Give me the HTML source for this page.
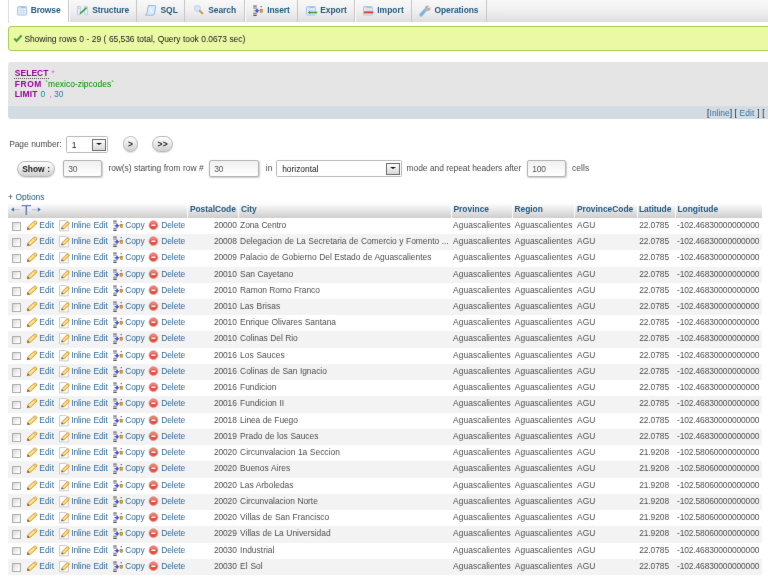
<!DOCTYPE html>
<html><head><meta charset="utf-8"><title>phpMyAdmin</title>
<style>
html,body{margin:0;padding:0;background:#fff;}
body{width:768px;height:577px;overflow:hidden;position:relative;filter:url(#soft);font-family:"Liberation Sans",sans-serif;font-size:8.44px;color:#444;}
a{color:#316997;text-decoration:none;}
#topbar{position:absolute;left:0;top:0;width:768px;height:21.6px;}
#topbar .bg{position:absolute;left:8px;top:0;width:760px;height:21.6px;background:linear-gradient(#f8f8f8,#f1f1f1 45%,#dedede);}
#topbar .act{position:absolute;left:8px;top:0;width:60px;height:23px;background:#fff;border-left:1px solid #dcdcdc;box-sizing:border-box;}
#topbar u{position:absolute;top:0;width:1.5px;height:21.6px;background:linear-gradient(90deg,#c6c6c6 55%,#fcfcfc 55%);}
#topbar>span{position:absolute;top:0;line-height:21.6px;font-weight:bold;color:#235a81;white-space:nowrap;}
#topbar svg{position:absolute;overflow:visible;}
#succ{position:absolute;left:8px;top:25.8px;width:770px;height:25px;background:#ebf8a4;border:1px solid #a2d246;border-radius:3px;box-sizing:border-box;}
#succ>span{position:absolute;left:15.4px;top:0;line-height:25.4px;color:#1a1a1a;white-space:nowrap;}
#sql{position:absolute;left:8px;top:61.8px;width:770px;height:44px;background:#e5e5e5;border-radius:3px 3px 0 0;}
#sql div{position:absolute;white-space:nowrap;line-height:10.5px;}
#sql b{color:#909;}
#tools{position:absolute;left:8px;top:105.8px;width:770px;height:12.9px;background:#d3dce3;border-radius:0 0 3px 3px;}
#tools>span{position:absolute;top:0;line-height:14px;white-space:nowrap;color:#222;}
#tools a{color:#3d73a0;}
.lbl{position:absolute;white-space:nowrap;line-height:12px;color:#4a4a4a;}
.inp{position:absolute;box-sizing:border-box;border:1px solid #b2b2b2;border-radius:2px;background:linear-gradient(#f0f0f0,#fff);box-shadow:0.5px 1px 1.5px #ccc;line-height:16.8px;padding-left:4px;color:#555;height:16.4px;}
.btn{position:absolute;box-sizing:border-box;border:1px solid #b8b8b8;border-radius:9px;background:linear-gradient(#fff,#d0d0d0);font-weight:bold;color:#222;text-align:center;box-shadow:0 1px 1px #ddd;}
.sel{position:absolute;box-sizing:border-box;border:1px solid #b8b8b8;border-radius:1.5px;background:#fff;color:#1a1a1a;height:16.4px;line-height:16.4px;padding-left:5px;}
.sel i{position:absolute;right:1.6px;top:1.8px;width:13.8px;height:11.5px;box-sizing:border-box;border:1px solid #6a6a6a;border-radius:0.5px;background:linear-gradient(#fcfcfc,#d8d8d8);}
.sel i:after{content:"";position:absolute;left:2.7px;top:3.3px;border:3.2px solid transparent;border-top:2.9px solid #111;border-bottom:0;}
#thead{position:absolute;left:8px;top:201.3px;width:753.5px;height:16.5px;background:linear-gradient(#fff,#fdfdfd 15%,#cdcdcd);}
#thead>span{position:absolute;top:0;line-height:17.2px;font-weight:bold;color:#235a81;white-space:nowrap;}
#thead u{position:absolute;top:0;width:1.3px;height:16.5px;background:#fff;opacity:.85;}
.row{position:absolute;left:8px;width:753.5px;}
.row.even{background:#f3f3f3;}
.row.odd{background:#fff;}
.row>span,.row>a{position:absolute;top:0;line-height:15px;white-space:nowrap;}
.row>span{color:#4e4e4e;}
.row>span.r{text-align:right;}
.row .cb{position:absolute;left:4.3px;top:4.2px;width:8.6px;height:8.6px;box-sizing:border-box;border:1px solid #acacac;border-radius:0.6px;background:linear-gradient(135deg,#d6d6d6,#fbfbfb 75%);}
.row .ic{position:absolute;top:2px;width:12px;height:12px;overflow:visible;}
</style></head><body>
<svg width="0" height="0" style="position:absolute">
 <defs>
  <filter id="soft" x="0" y="0" width="100%" height="100%" color-interpolation-filters="sRGB"><feConvolveMatrix order="3" kernelMatrix="0.0028 0.0471 0.0028 0.0471 0.8008 0.0471 0.0028 0.0471 0.0028" divisor="1" edgeMode="duplicate" preserveAlpha="false"/></filter>
  <symbol id="i-edit" viewBox="0 0 12 12" overflow="visible">
   <path d="M1.3 9.7 L1.84 6.87 L7.95 1.40 Q9.2 0.4 10.3 1.6 Q11.2 2.9 10.3 4.0 L4.18 9.47 Z" fill="#f8d662" stroke="#d39236" stroke-width="0.8" stroke-linejoin="round"/>
   <path d="M1.15 9.85 L1.75 7.3 L3.9 9.3 Z" fill="#7d5a3a"/>
   <path d="M3.2 7.9 L8.9 2.7" stroke="#fdeeb0" stroke-width="1.1"/>
   <path d="M7.5 2.0 L9.8 4.5" stroke="#e0a040" stroke-width="0.7"/>
  </symbol>
  <symbol id="i-inl" viewBox="0 0 12 12" overflow="visible">
   <path d="M0.5 0.5 h6.4 l2.4 2.4 v8 h-8.8z" fill="#fcfcfc" stroke="#c6c6c6" stroke-width="0.9"/>
   <path d="M2.5 9.0 L3.1 6.7 L8.0 2.0 Q9.0 1.3 9.9 2.2 Q10.6 3.2 9.8 4.1 L5.0 8.8 Z" fill="#f8d25c" stroke="#cf8a30" stroke-width="0.8" stroke-linejoin="round"/>
   <path d="M2.35 9.2 L2.95 7.2 L4.6 8.8 Z" fill="#7d5a3a"/>
   <path d="M4.2 7.4 L8.8 3.2" stroke="#fdeeb0" stroke-width="0.9"/>
  </symbol>
  <symbol id="i-copy" viewBox="0 0 12 12" overflow="visible">
   <path d="M2 0.4 v1.4 M2 2.6 v1 M2 7.7 v1 M2 9.5 v1.5" stroke="#555" stroke-width="3.4"/>
   <path d="M2 1.8v0.8M2 8.7v0.8" stroke="#d0d0d0" stroke-width="3.4"/>
   <path d="M0.5 5.7 L2.9 4.9 L4.2 3.2 L5.2 4.9 L6.8 5.7 L5.2 6.5 L4.2 8.2 L2.9 6.5 Z" fill="#4b4fe0"/>
   <rect x="7.1" y="4.2" width="2.3" height="3" fill="#f0a818" stroke="#8a6416" stroke-width="0.5"/>
   <rect x="7.6" y="1" width="1.3" height="1.2" fill="#5a5ee8"/>
  </symbol>
  <symbol id="i-del" viewBox="0 0 12 12" overflow="visible">
   <circle cx="5.4" cy="5.2" r="4.35" fill="#e24e44" stroke="#f0958b" stroke-width="0.9"/>
   <path d="M1.5 4.2 A4 4 0 0 1 9.3 4.2 Q5.4 2.6 1.5 4.2Z" fill="#f0877d" opacity="0.85"/>
   <rect x="3.3" y="4.55" width="4.2" height="1.4" rx="0.3" fill="#fff"/>
  </symbol>
  <symbol id="i-tbl" viewBox="0 0 11 11" overflow="visible">
   <rect x="0.5" y="0.5" width="9.2" height="8.6" rx="0.8" fill="#eaf2fc" stroke="#a9c6ea"/><rect x="1" y="1" width="8.2" height="1.6" fill="#cfe0f5"/><rect x="3.9" y="1.1" width="4.8" height="0.9" fill="#9ccc6a"/><path d="M1 4.6h8.2M1 6.8h8.2M3.7 2.6v6M6.5 2.6v6" stroke="#c2d6f0" stroke-width="0.7"/>
  </symbol>
 </defs>
</svg>
<div id="topbar">
 <div class="bg"></div><div class="act"></div>
 <u style="left:68px"></u><u style="left:135.75px"></u><u style="left:183.75px"></u><u style="left:244px"></u><u style="left:296.5px"></u><u style="left:354px"></u><u style="left:410.75px"></u><u style="left:485.8px"></u>
 <svg style="left:16.8px;top:5.6px" width="11" height="11"><use href="#i-tbl"/></svg>
 <span style="left:30.7px"><span style="letter-spacing:-0.106px">Browse</span></span>
 <svg style="left:77px;top:5.8px" width="11" height="9" viewBox="0 0 11 9"><rect x="0.4" y="0.4" width="3.2" height="8.4" rx="0.6" fill="#e4eefb" stroke="#a9c6ea" stroke-width="0.8"/><rect x="7.4" y="0.4" width="3.2" height="8.4" rx="0.6" fill="#e4eefb" stroke="#a9c6ea" stroke-width="0.8"/><path d="M0.8 2.2h2.4M7.8 2.2h2.4" stroke="#b6d4a0" stroke-width="0.8"/><path d="M3.4 7.2 L5 5.8 L9 2.2" stroke="#46a23a" stroke-width="1.7" stroke-linecap="round" fill="none"/></svg>
 <span style="left:92.25px"><span style="letter-spacing:-0.058px">Structure</span></span>
 <svg style="left:145px;top:5.1px" width="11.5" height="11" viewBox="0 0 11.5 11"><path d="M3 0.6 h7.2 q0.8 0 0.6 1 l-1.6 7.6 q-0.2 1 -1.2 1 h-7.2 q-0.8 0 0 -1.2 l1 -0.3 l1.4 -7.1 q0.2 -1 1 -1z" fill="#d9e8fa" stroke="#8db4e2" stroke-width="0.9"/><path d="M4.2 3 L7.8 7.8" stroke="#eef5fd" stroke-width="1.6"/></svg>
 <span style="left:160.4px"><span style="letter-spacing:0.058px">SQL</span></span>
 <svg style="left:193.6px;top:5px" width="11" height="11" viewBox="0 0 11 11"><circle cx="3.4" cy="3.4" r="3" fill="#d6e8fa" stroke="#b4cdea" stroke-width="0.9"/><path d="M5.9 6 L8.4 8.4" stroke="#c69645" stroke-width="2" stroke-linecap="round"/></svg>
 <span style="left:208.25px"><span style="letter-spacing:-0.041px">Search</span></span>
 <svg style="left:252.9px;top:5.4px;width:12px;height:12px"><use href="#i-copy"/></svg>
 <span style="left:267.15px"><span style="letter-spacing:-0.045px">Insert</span></span>
 <svg style="left:305.8px;top:5.6px" width="12" height="10" viewBox="0 0 12 10"><rect x="0.5" y="0.5" width="8.8" height="8.6" rx="0.8" fill="#eaf2fc" stroke="#a9c6ea"/><rect x="1" y="1" width="7.8" height="1.6" fill="#cfe0f5"/><rect x="3.4" y="1.1" width="5" height="0.9" fill="#9ccc6a"/><path d="M1.2 4.3h7.4M3.8 2.6v6M6.4 2.6v6" stroke="#c2d6f0" stroke-width="0.7"/><path d="M3 6.5h8.2" stroke="#3aa32e" stroke-width="1.6"/><path d="M4.2 4.8 L1.6 6.5 L4.2 8.2z" fill="#3aa32e"/></svg>
 <span style="left:320.2px"><span style="letter-spacing:-0.020px">Export</span></span>
 <svg style="left:363px;top:5.6px" width="12" height="10" viewBox="0 0 12 10"><rect x="0.5" y="0.5" width="8.8" height="8.6" rx="0.8" fill="#eaf2fc" stroke="#a9c6ea"/><rect x="1" y="1" width="7.8" height="1.6" fill="#cfe0f5"/><rect x="3.4" y="1.1" width="5" height="0.9" fill="#9ccc6a"/><path d="M1.2 4.3h7.4M3.8 2.6v3M6.4 2.6v3" stroke="#c2d6f0" stroke-width="0.7"/><path d="M1 6.4h8.4" stroke="#ea3a30" stroke-width="2.1"/><path d="M8.8 5 L10.6 6.4 L8.8 7.8z" fill="#ea3a30"/></svg>
 <span style="left:377.2px"><span style="letter-spacing:0.059px">Import</span></span>
 <svg style="left:419.4px;top:4.6px" width="12" height="12" viewBox="0 0 12 12"><path d="M2 9.9 L6.4 5" stroke="#7db0e8" stroke-width="3.3" stroke-linecap="round"/><path d="M5.9 5.6 L7.8 3.6" stroke="#b2b6ba" stroke-width="2.6"/><circle cx="8.7" cy="3.3" r="2.8" fill="#b2b6ba"/><path d="M8.9 3.2 L12 2 L10.2 -0.4 Z" fill="#f3f3f3"/></svg>
 <span style="left:434.45px"><span style="letter-spacing:-0.042px">Operations</span></span>
</div>
<div id="succ"><svg style="position:absolute;left:3.5px;top:7.7px;overflow:visible" width="10" height="9" viewBox="0 0 10 9"><path d="M1.3 4.5 L3.6 7 L8.6 1.4" stroke="#4aa03e" stroke-width="2.1" fill="none"/></svg><span><span style="letter-spacing:-0.034px;word-spacing:0.251px">Showing rows 0 - 29 ( 65,536 total, Query took 0.0673 sec)</span></span></div>
<div id="sql">
 <div style="left:6.8px;top:6.6px"><b><span style="letter-spacing:0.076px">SELECT</span></b></div>
 <div style="left:6px;top:16.4px;width:35px;height:0;border-top:1px dotted #555"></div>
 <div style="left:43.6px;top:6.6px;color:#d868d8">*</div>
 <div style="left:6.8px;top:17.1px"><b><span style="letter-spacing:0.6px">FROM</span></b></div>
 <div style="left:37.3px;top:17.1px;color:#080"><span style="letter-spacing:0.019px">`mexico-zipcodes`</span></div>
 <div style="left:6.8px;top:27.6px"><b><span style="letter-spacing:0.137px">LIMIT</span></b></div>
 <div style="left:32.6px;top:27.6px;color:#1a86a4"><span style="letter-spacing:-0.151px">0</span></div>
 <div style="left:41.4px;top:27.6px;color:#d868d8">,</div>
 <div style="left:46.1px;top:27.6px;color:#1a86a4"><span style="letter-spacing:-0.151px">30</span></div>
</div>
<div id="tools"><span style="left:699px"><span style="letter-spacing:0.251px">[</span><a><span style="letter-spacing:-0.010px">Inline</span></a><span style="letter-spacing:0.251px">]</span></span><span style="left:726.6px"><span style="letter-spacing:0.251px">[</span></span><a style="position:absolute;left:731.5px;top:0;line-height:14px"><span style="letter-spacing:0.096px">Edit</span></a><span style="left:749.2px"><span style="letter-spacing:0.251px">]</span></span><span style="left:754.3px"><span style="letter-spacing:0.251px">[</span></span></div>

<span class="lbl" style="left:9.2px;top:138px"><span style="letter-spacing:-0.058px;word-spacing:0.251px">Page number:</span></span>
<div class="sel" style="left:66.2px;top:136.3px;width:42.2px;padding-left:4.6px"><span style="letter-spacing:-0.151px">1</span><i></i></div>
<div class="btn" style="left:122.6px;top:135.9px;width:15.6px;height:15.7px;line-height:15px">&gt;</div>
<div class="btn" style="left:152.3px;top:135.9px;width:20.8px;height:15.7px;line-height:15px"><span style="letter-spacing:0.263px">&gt;&gt;</span></div>

<div class="btn" style="left:17px;top:161.25px;width:38.3px;height:15.5px;line-height:14.4px"><span style="letter-spacing:-0.001px;word-spacing:0.251px">Show :</span></div>
<div class="inp" style="left:63.3px;top:160.3px;width:38.4px"><span style="letter-spacing:-0.151px">30</span></div>
<span class="lbl" style="left:108.4px;top:162.1px"><span style="letter-spacing:-0.049px;word-spacing:0.251px">row(s) starting from row #</span></span>
<div class="inp" style="left:209.2px;top:160.3px;width:50.3px"><span style="letter-spacing:-0.151px">30</span></div>
<span class="lbl" style="left:265.8px;top:162.1px"><span style="letter-spacing:-0.040px">in</span></span>
<div class="sel" style="left:276.2px;top:160.3px;width:126.3px"><span style="letter-spacing:-0.025px">horizontal</span><i></i></div>
<span class="lbl" style="left:406.6px;top:162.1px"><span style="letter-spacing:-0.070px;word-spacing:0.251px">mode and repeat headers after</span></span>
<div class="inp" style="left:527.2px;top:160.3px;width:38.6px"><span style="letter-spacing:-0.151px">100</span></div>
<span class="lbl" style="left:571.9px;top:162.1px"><span style="letter-spacing:0.128px">cells</span></span>

<span class="lbl" style="left:7.9px;top:190.9px;color:#235a81"><span style="color:#333">+</span><span style="letter-spacing:0.015px;word-spacing:0.251px"> Options</span></span>
<div id="thead">
 <svg style="position:absolute;left:0;top:0;overflow:visible" width="40" height="17" viewBox="0 0 40 17"><path d="M3 8.6 L6 6.4 V10.8Z M32.8 8.6 L29.8 6.4 V10.8Z" fill="#4572ad"/><path d="M6 8.6H11.8M24 8.6H29.8" stroke="#b4cbe4" stroke-width="1.2"/></svg>
 <span style="left:13.55px;top:0.4px;font-weight:normal;font-size:14.3px;line-height:16px;color:#6685bb;transform:scaleX(1.16)">T</span>
 <span style="left:181.9px"><span style="letter-spacing:-0.035px">PostalCode</span></span>
 <span style="left:233.1px"><span style="letter-spacing:-0.092px">City</span></span>
 <span style="left:445.4px"><span style="letter-spacing:0.005px">Province</span></span>
 <span style="left:506.4px"><span style="letter-spacing:-0.007px">Region</span></span>
 <span style="left:568.9px"><span style="letter-spacing:-0.024px">ProvinceCode</span></span>
 <span style="left:630.9px"><span style="letter-spacing:-0.046px">Latitude</span></span>
 <span style="left:669.4px"><span style="letter-spacing:0.012px">Longitude</span></span>
 <u style="left:179px"></u><u style="left:230.2px"></u><u style="left:442.8px"></u><u style="left:504px"></u><u style="left:566.2px"></u><u style="left:628.7px"></u><u style="left:667px"></u>
</div>
<div class="row odd" style="top:217.80px;height:16.29px"><i class="cb"></i><svg class="ic" style="left:17.8px"><use href="#i-edit"/></svg><a style="left:31.2px;letter-spacing:0.096px">Edit</a><svg class="ic" style="left:50.5px"><use href="#i-inl"/></svg><a style="left:63.2px;letter-spacing:-0.070px;word-spacing:0.251px">Inline Edit</a><svg class="ic" style="left:104.8px"><use href="#i-copy"/></svg><a style="left:117.2px;letter-spacing:-0.058px">Copy</a><svg class="ic" style="left:140.4px"><use href="#i-del"/></svg><a style="left:153.2px;letter-spacing:-0.064px">Delete</a><span class="r" style="left:180px;width:48.7px;letter-spacing:-0.151px">20000</span><span style="left:232.1px;letter-spacing:-0.099px;word-spacing:0.251px">Zona Centro</span><span style="left:445.1px;letter-spacing:0.037px">Aguascalientes</span><span style="left:506.8px;letter-spacing:0.037px">Aguascalientes</span><span style="left:569.1px;letter-spacing:-0.039px">AGU</span><span style="left:631.2px;letter-spacing:-0.093px">22.0785</span><span style="left:669.0px;letter-spacing:-0.133px">-102.46830000000000</span></div>
<div class="row even" style="top:234.04px;height:16.29px"><i class="cb"></i><svg class="ic" style="left:17.8px"><use href="#i-edit"/></svg><a style="left:31.2px;letter-spacing:0.096px">Edit</a><svg class="ic" style="left:50.5px"><use href="#i-inl"/></svg><a style="left:63.2px;letter-spacing:-0.070px;word-spacing:0.251px">Inline Edit</a><svg class="ic" style="left:104.8px"><use href="#i-copy"/></svg><a style="left:117.2px;letter-spacing:-0.058px">Copy</a><svg class="ic" style="left:140.4px"><use href="#i-del"/></svg><a style="left:153.2px;letter-spacing:-0.064px">Delete</a><span class="r" style="left:180px;width:48.7px;letter-spacing:-0.151px">20008</span><span style="left:232.1px;letter-spacing:-0.025px;word-spacing:0.251px">Delegacion de La Secretaria de Comercio y Fomento ...</span><span style="left:445.1px;letter-spacing:0.037px">Aguascalientes</span><span style="left:506.8px;letter-spacing:0.037px">Aguascalientes</span><span style="left:569.1px;letter-spacing:-0.039px">AGU</span><span style="left:631.2px;letter-spacing:-0.093px">22.0785</span><span style="left:669.0px;letter-spacing:-0.133px">-102.46830000000000</span></div>
<div class="row odd" style="top:250.27px;height:16.29px"><i class="cb"></i><svg class="ic" style="left:17.8px"><use href="#i-edit"/></svg><a style="left:31.2px;letter-spacing:0.096px">Edit</a><svg class="ic" style="left:50.5px"><use href="#i-inl"/></svg><a style="left:63.2px;letter-spacing:-0.070px;word-spacing:0.251px">Inline Edit</a><svg class="ic" style="left:104.8px"><use href="#i-copy"/></svg><a style="left:117.2px;letter-spacing:-0.058px">Copy</a><svg class="ic" style="left:140.4px"><use href="#i-del"/></svg><a style="left:153.2px;letter-spacing:-0.064px">Delete</a><span class="r" style="left:180px;width:48.7px;letter-spacing:-0.151px">20009</span><span style="left:232.1px;letter-spacing:-0.017px;word-spacing:0.251px">Palacio de Gobierno Del Estado de Aguascalientes</span><span style="left:445.1px;letter-spacing:0.037px">Aguascalientes</span><span style="left:506.8px;letter-spacing:0.037px">Aguascalientes</span><span style="left:569.1px;letter-spacing:-0.039px">AGU</span><span style="left:631.2px;letter-spacing:-0.093px">22.0785</span><span style="left:669.0px;letter-spacing:-0.133px">-102.46830000000000</span></div>
<div class="row even" style="top:266.50px;height:16.29px"><i class="cb"></i><svg class="ic" style="left:17.8px"><use href="#i-edit"/></svg><a style="left:31.2px;letter-spacing:0.096px">Edit</a><svg class="ic" style="left:50.5px"><use href="#i-inl"/></svg><a style="left:63.2px;letter-spacing:-0.070px;word-spacing:0.251px">Inline Edit</a><svg class="ic" style="left:104.8px"><use href="#i-copy"/></svg><a style="left:117.2px;letter-spacing:-0.058px">Copy</a><svg class="ic" style="left:140.4px"><use href="#i-del"/></svg><a style="left:153.2px;letter-spacing:-0.064px">Delete</a><span class="r" style="left:180px;width:48.7px;letter-spacing:-0.151px">20010</span><span style="left:232.1px;letter-spacing:-0.044px;word-spacing:0.251px">San Cayetano</span><span style="left:445.1px;letter-spacing:0.037px">Aguascalientes</span><span style="left:506.8px;letter-spacing:0.037px">Aguascalientes</span><span style="left:569.1px;letter-spacing:-0.039px">AGU</span><span style="left:631.2px;letter-spacing:-0.093px">22.0785</span><span style="left:669.0px;letter-spacing:-0.133px">-102.46830000000000</span></div>
<div class="row odd" style="top:282.74px;height:16.29px"><i class="cb"></i><svg class="ic" style="left:17.8px"><use href="#i-edit"/></svg><a style="left:31.2px;letter-spacing:0.096px">Edit</a><svg class="ic" style="left:50.5px"><use href="#i-inl"/></svg><a style="left:63.2px;letter-spacing:-0.070px;word-spacing:0.251px">Inline Edit</a><svg class="ic" style="left:104.8px"><use href="#i-copy"/></svg><a style="left:117.2px;letter-spacing:-0.058px">Copy</a><svg class="ic" style="left:140.4px"><use href="#i-del"/></svg><a style="left:153.2px;letter-spacing:-0.064px">Delete</a><span class="r" style="left:180px;width:48.7px;letter-spacing:-0.151px">20010</span><span style="left:232.1px;letter-spacing:-0.080px;word-spacing:0.251px">Ramon Romo Franco</span><span style="left:445.1px;letter-spacing:0.037px">Aguascalientes</span><span style="left:506.8px;letter-spacing:0.037px">Aguascalientes</span><span style="left:569.1px;letter-spacing:-0.039px">AGU</span><span style="left:631.2px;letter-spacing:-0.093px">22.0785</span><span style="left:669.0px;letter-spacing:-0.133px">-102.46830000000000</span></div>
<div class="row even" style="top:298.98px;height:16.29px"><i class="cb"></i><svg class="ic" style="left:17.8px"><use href="#i-edit"/></svg><a style="left:31.2px;letter-spacing:0.096px">Edit</a><svg class="ic" style="left:50.5px"><use href="#i-inl"/></svg><a style="left:63.2px;letter-spacing:-0.070px;word-spacing:0.251px">Inline Edit</a><svg class="ic" style="left:104.8px"><use href="#i-copy"/></svg><a style="left:117.2px;letter-spacing:-0.058px">Copy</a><svg class="ic" style="left:140.4px"><use href="#i-del"/></svg><a style="left:153.2px;letter-spacing:-0.064px">Delete</a><span class="r" style="left:180px;width:48.7px;letter-spacing:-0.151px">20010</span><span style="left:232.1px;letter-spacing:0.059px;word-spacing:0.251px">Las Brisas</span><span style="left:445.1px;letter-spacing:0.037px">Aguascalientes</span><span style="left:506.8px;letter-spacing:0.037px">Aguascalientes</span><span style="left:569.1px;letter-spacing:-0.039px">AGU</span><span style="left:631.2px;letter-spacing:-0.093px">22.0785</span><span style="left:669.0px;letter-spacing:-0.133px">-102.46830000000000</span></div>
<div class="row odd" style="top:315.21px;height:16.29px"><i class="cb"></i><svg class="ic" style="left:17.8px"><use href="#i-edit"/></svg><a style="left:31.2px;letter-spacing:0.096px">Edit</a><svg class="ic" style="left:50.5px"><use href="#i-inl"/></svg><a style="left:63.2px;letter-spacing:-0.070px;word-spacing:0.251px">Inline Edit</a><svg class="ic" style="left:104.8px"><use href="#i-copy"/></svg><a style="left:117.2px;letter-spacing:-0.058px">Copy</a><svg class="ic" style="left:140.4px"><use href="#i-del"/></svg><a style="left:153.2px;letter-spacing:-0.064px">Delete</a><span class="r" style="left:180px;width:48.7px;letter-spacing:-0.151px">20010</span><span style="left:232.1px;letter-spacing:-0.026px;word-spacing:0.251px">Enrique Olivares Santana</span><span style="left:445.1px;letter-spacing:0.037px">Aguascalientes</span><span style="left:506.8px;letter-spacing:0.037px">Aguascalientes</span><span style="left:569.1px;letter-spacing:-0.039px">AGU</span><span style="left:631.2px;letter-spacing:-0.093px">22.0785</span><span style="left:669.0px;letter-spacing:-0.133px">-102.46830000000000</span></div>
<div class="row even" style="top:331.44px;height:16.29px"><i class="cb"></i><svg class="ic" style="left:17.8px"><use href="#i-edit"/></svg><a style="left:31.2px;letter-spacing:0.096px">Edit</a><svg class="ic" style="left:50.5px"><use href="#i-inl"/></svg><a style="left:63.2px;letter-spacing:-0.070px;word-spacing:0.251px">Inline Edit</a><svg class="ic" style="left:104.8px"><use href="#i-copy"/></svg><a style="left:117.2px;letter-spacing:-0.058px">Copy</a><svg class="ic" style="left:140.4px"><use href="#i-del"/></svg><a style="left:153.2px;letter-spacing:-0.064px">Delete</a><span class="r" style="left:180px;width:48.7px;letter-spacing:-0.151px">20010</span><span style="left:232.1px;letter-spacing:-0.060px;word-spacing:0.251px">Colinas Del Rio</span><span style="left:445.1px;letter-spacing:0.037px">Aguascalientes</span><span style="left:506.8px;letter-spacing:0.037px">Aguascalientes</span><span style="left:569.1px;letter-spacing:-0.039px">AGU</span><span style="left:631.2px;letter-spacing:-0.093px">22.0785</span><span style="left:669.0px;letter-spacing:-0.133px">-102.46830000000000</span></div>
<div class="row odd" style="top:347.68px;height:16.29px"><i class="cb"></i><svg class="ic" style="left:17.8px"><use href="#i-edit"/></svg><a style="left:31.2px;letter-spacing:0.096px">Edit</a><svg class="ic" style="left:50.5px"><use href="#i-inl"/></svg><a style="left:63.2px;letter-spacing:-0.070px;word-spacing:0.251px">Inline Edit</a><svg class="ic" style="left:104.8px"><use href="#i-copy"/></svg><a style="left:117.2px;letter-spacing:-0.058px">Copy</a><svg class="ic" style="left:140.4px"><use href="#i-del"/></svg><a style="left:153.2px;letter-spacing:-0.064px">Delete</a><span class="r" style="left:180px;width:48.7px;letter-spacing:-0.151px">20016</span><span style="left:232.1px;letter-spacing:0.043px;word-spacing:0.251px">Los Sauces</span><span style="left:445.1px;letter-spacing:0.037px">Aguascalientes</span><span style="left:506.8px;letter-spacing:0.037px">Aguascalientes</span><span style="left:569.1px;letter-spacing:-0.039px">AGU</span><span style="left:631.2px;letter-spacing:-0.093px">22.0785</span><span style="left:669.0px;letter-spacing:-0.133px">-102.46830000000000</span></div>
<div class="row even" style="top:363.92px;height:16.29px"><i class="cb"></i><svg class="ic" style="left:17.8px"><use href="#i-edit"/></svg><a style="left:31.2px;letter-spacing:0.096px">Edit</a><svg class="ic" style="left:50.5px"><use href="#i-inl"/></svg><a style="left:63.2px;letter-spacing:-0.070px;word-spacing:0.251px">Inline Edit</a><svg class="ic" style="left:104.8px"><use href="#i-copy"/></svg><a style="left:117.2px;letter-spacing:-0.058px">Copy</a><svg class="ic" style="left:140.4px"><use href="#i-del"/></svg><a style="left:153.2px;letter-spacing:-0.064px">Delete</a><span class="r" style="left:180px;width:48.7px;letter-spacing:-0.151px">20016</span><span style="left:232.1px;letter-spacing:-0.027px;word-spacing:0.251px">Colinas de San Ignacio</span><span style="left:445.1px;letter-spacing:0.037px">Aguascalientes</span><span style="left:506.8px;letter-spacing:0.037px">Aguascalientes</span><span style="left:569.1px;letter-spacing:-0.039px">AGU</span><span style="left:631.2px;letter-spacing:-0.093px">22.0785</span><span style="left:669.0px;letter-spacing:-0.133px">-102.46830000000000</span></div>
<div class="row odd" style="top:380.15px;height:16.29px"><i class="cb"></i><svg class="ic" style="left:17.8px"><use href="#i-edit"/></svg><a style="left:31.2px;letter-spacing:0.096px">Edit</a><svg class="ic" style="left:50.5px"><use href="#i-inl"/></svg><a style="left:63.2px;letter-spacing:-0.070px;word-spacing:0.251px">Inline Edit</a><svg class="ic" style="left:104.8px"><use href="#i-copy"/></svg><a style="left:117.2px;letter-spacing:-0.058px">Copy</a><svg class="ic" style="left:140.4px"><use href="#i-del"/></svg><a style="left:153.2px;letter-spacing:-0.064px">Delete</a><span class="r" style="left:180px;width:48.7px;letter-spacing:-0.151px">20016</span><span style="left:232.1px;letter-spacing:-0.028px">Fundicion</span><span style="left:445.1px;letter-spacing:0.037px">Aguascalientes</span><span style="left:506.8px;letter-spacing:0.037px">Aguascalientes</span><span style="left:569.1px;letter-spacing:-0.039px">AGU</span><span style="left:631.2px;letter-spacing:-0.093px">22.0785</span><span style="left:669.0px;letter-spacing:-0.133px">-102.46830000000000</span></div>
<div class="row even" style="top:396.38px;height:16.29px"><i class="cb"></i><svg class="ic" style="left:17.8px"><use href="#i-edit"/></svg><a style="left:31.2px;letter-spacing:0.096px">Edit</a><svg class="ic" style="left:50.5px"><use href="#i-inl"/></svg><a style="left:63.2px;letter-spacing:-0.070px;word-spacing:0.251px">Inline Edit</a><svg class="ic" style="left:104.8px"><use href="#i-copy"/></svg><a style="left:117.2px;letter-spacing:-0.058px">Copy</a><svg class="ic" style="left:140.4px"><use href="#i-del"/></svg><a style="left:153.2px;letter-spacing:-0.064px">Delete</a><span class="r" style="left:180px;width:48.7px;letter-spacing:-0.151px">20016</span><span style="left:232.1px;letter-spacing:0.021px;word-spacing:0.251px">Fundicion II</span><span style="left:445.1px;letter-spacing:0.037px">Aguascalientes</span><span style="left:506.8px;letter-spacing:0.037px">Aguascalientes</span><span style="left:569.1px;letter-spacing:-0.039px">AGU</span><span style="left:631.2px;letter-spacing:-0.093px">22.0785</span><span style="left:669.0px;letter-spacing:-0.133px">-102.46830000000000</span></div>
<div class="row odd" style="top:412.62px;height:16.29px"><i class="cb"></i><svg class="ic" style="left:17.8px"><use href="#i-edit"/></svg><a style="left:31.2px;letter-spacing:0.096px">Edit</a><svg class="ic" style="left:50.5px"><use href="#i-inl"/></svg><a style="left:63.2px;letter-spacing:-0.070px;word-spacing:0.251px">Inline Edit</a><svg class="ic" style="left:104.8px"><use href="#i-copy"/></svg><a style="left:117.2px;letter-spacing:-0.058px">Copy</a><svg class="ic" style="left:140.4px"><use href="#i-del"/></svg><a style="left:153.2px;letter-spacing:-0.064px">Delete</a><span class="r" style="left:180px;width:48.7px;letter-spacing:-0.151px">20018</span><span style="left:232.1px;letter-spacing:-0.100px;word-spacing:0.251px">Linea de Fuego</span><span style="left:445.1px;letter-spacing:0.037px">Aguascalientes</span><span style="left:506.8px;letter-spacing:0.037px">Aguascalientes</span><span style="left:569.1px;letter-spacing:-0.039px">AGU</span><span style="left:631.2px;letter-spacing:-0.093px">22.0785</span><span style="left:669.0px;letter-spacing:-0.133px">-102.46830000000000</span></div>
<div class="row even" style="top:428.86px;height:16.29px"><i class="cb"></i><svg class="ic" style="left:17.8px"><use href="#i-edit"/></svg><a style="left:31.2px;letter-spacing:0.096px">Edit</a><svg class="ic" style="left:50.5px"><use href="#i-inl"/></svg><a style="left:63.2px;letter-spacing:-0.070px;word-spacing:0.251px">Inline Edit</a><svg class="ic" style="left:104.8px"><use href="#i-copy"/></svg><a style="left:117.2px;letter-spacing:-0.058px">Copy</a><svg class="ic" style="left:140.4px"><use href="#i-del"/></svg><a style="left:153.2px;letter-spacing:-0.064px">Delete</a><span class="r" style="left:180px;width:48.7px;letter-spacing:-0.151px">20019</span><span style="left:232.1px;letter-spacing:-0.006px;word-spacing:0.251px">Prado de los Sauces</span><span style="left:445.1px;letter-spacing:0.037px">Aguascalientes</span><span style="left:506.8px;letter-spacing:0.037px">Aguascalientes</span><span style="left:569.1px;letter-spacing:-0.039px">AGU</span><span style="left:631.2px;letter-spacing:-0.093px">22.0785</span><span style="left:669.0px;letter-spacing:-0.133px">-102.46830000000000</span></div>
<div class="row odd" style="top:445.09px;height:16.29px"><i class="cb"></i><svg class="ic" style="left:17.8px"><use href="#i-edit"/></svg><a style="left:31.2px;letter-spacing:0.096px">Edit</a><svg class="ic" style="left:50.5px"><use href="#i-inl"/></svg><a style="left:63.2px;letter-spacing:-0.070px;word-spacing:0.251px">Inline Edit</a><svg class="ic" style="left:104.8px"><use href="#i-copy"/></svg><a style="left:117.2px;letter-spacing:-0.058px">Copy</a><svg class="ic" style="left:140.4px"><use href="#i-del"/></svg><a style="left:153.2px;letter-spacing:-0.064px">Delete</a><span class="r" style="left:180px;width:48.7px;letter-spacing:-0.151px">20020</span><span style="left:232.1px;letter-spacing:-0.001px;word-spacing:0.251px">Circunvalacion 1a Seccion</span><span style="left:445.1px;letter-spacing:0.037px">Aguascalientes</span><span style="left:506.8px;letter-spacing:0.037px">Aguascalientes</span><span style="left:569.1px;letter-spacing:-0.039px">AGU</span><span style="left:631.2px;letter-spacing:-0.093px">21.9208</span><span style="left:669.0px;letter-spacing:-0.133px">-102.58060000000000</span></div>
<div class="row even" style="top:461.32px;height:16.29px"><i class="cb"></i><svg class="ic" style="left:17.8px"><use href="#i-edit"/></svg><a style="left:31.2px;letter-spacing:0.096px">Edit</a><svg class="ic" style="left:50.5px"><use href="#i-inl"/></svg><a style="left:63.2px;letter-spacing:-0.070px;word-spacing:0.251px">Inline Edit</a><svg class="ic" style="left:104.8px"><use href="#i-copy"/></svg><a style="left:117.2px;letter-spacing:-0.058px">Copy</a><svg class="ic" style="left:140.4px"><use href="#i-del"/></svg><a style="left:153.2px;letter-spacing:-0.064px">Delete</a><span class="r" style="left:180px;width:48.7px;letter-spacing:-0.151px">20020</span><span style="left:232.1px;letter-spacing:0.014px;word-spacing:0.251px">Buenos Aires</span><span style="left:445.1px;letter-spacing:0.037px">Aguascalientes</span><span style="left:506.8px;letter-spacing:0.037px">Aguascalientes</span><span style="left:569.1px;letter-spacing:-0.039px">AGU</span><span style="left:631.2px;letter-spacing:-0.093px">21.9208</span><span style="left:669.0px;letter-spacing:-0.133px">-102.58060000000000</span></div>
<div class="row odd" style="top:477.56px;height:16.29px"><i class="cb"></i><svg class="ic" style="left:17.8px"><use href="#i-edit"/></svg><a style="left:31.2px;letter-spacing:0.096px">Edit</a><svg class="ic" style="left:50.5px"><use href="#i-inl"/></svg><a style="left:63.2px;letter-spacing:-0.070px;word-spacing:0.251px">Inline Edit</a><svg class="ic" style="left:104.8px"><use href="#i-copy"/></svg><a style="left:117.2px;letter-spacing:-0.058px">Copy</a><svg class="ic" style="left:140.4px"><use href="#i-del"/></svg><a style="left:153.2px;letter-spacing:-0.064px">Delete</a><span class="r" style="left:180px;width:48.7px;letter-spacing:-0.151px">20020</span><span style="left:232.1px;letter-spacing:-0.026px;word-spacing:0.251px">Las Arboledas</span><span style="left:445.1px;letter-spacing:0.037px">Aguascalientes</span><span style="left:506.8px;letter-spacing:0.037px">Aguascalientes</span><span style="left:569.1px;letter-spacing:-0.039px">AGU</span><span style="left:631.2px;letter-spacing:-0.093px">21.9208</span><span style="left:669.0px;letter-spacing:-0.133px">-102.58060000000000</span></div>
<div class="row even" style="top:493.80px;height:16.29px"><i class="cb"></i><svg class="ic" style="left:17.8px"><use href="#i-edit"/></svg><a style="left:31.2px;letter-spacing:0.096px">Edit</a><svg class="ic" style="left:50.5px"><use href="#i-inl"/></svg><a style="left:63.2px;letter-spacing:-0.070px;word-spacing:0.251px">Inline Edit</a><svg class="ic" style="left:104.8px"><use href="#i-copy"/></svg><a style="left:117.2px;letter-spacing:-0.058px">Copy</a><svg class="ic" style="left:140.4px"><use href="#i-del"/></svg><a style="left:153.2px;letter-spacing:-0.064px">Delete</a><span class="r" style="left:180px;width:48.7px;letter-spacing:-0.151px">20020</span><span style="left:232.1px;letter-spacing:-0.035px;word-spacing:0.251px">Circunvalacion Norte</span><span style="left:445.1px;letter-spacing:0.037px">Aguascalientes</span><span style="left:506.8px;letter-spacing:0.037px">Aguascalientes</span><span style="left:569.1px;letter-spacing:-0.039px">AGU</span><span style="left:631.2px;letter-spacing:-0.093px">21.9208</span><span style="left:669.0px;letter-spacing:-0.133px">-102.58060000000000</span></div>
<div class="row odd" style="top:510.03px;height:16.29px"><i class="cb"></i><svg class="ic" style="left:17.8px"><use href="#i-edit"/></svg><a style="left:31.2px;letter-spacing:0.096px">Edit</a><svg class="ic" style="left:50.5px"><use href="#i-inl"/></svg><a style="left:63.2px;letter-spacing:-0.070px;word-spacing:0.251px">Inline Edit</a><svg class="ic" style="left:104.8px"><use href="#i-copy"/></svg><a style="left:117.2px;letter-spacing:-0.058px">Copy</a><svg class="ic" style="left:140.4px"><use href="#i-del"/></svg><a style="left:153.2px;letter-spacing:-0.064px">Delete</a><span class="r" style="left:180px;width:48.7px;letter-spacing:-0.151px">20020</span><span style="left:232.1px;letter-spacing:0.027px;word-spacing:0.251px">Villas de San Francisco</span><span style="left:445.1px;letter-spacing:0.037px">Aguascalientes</span><span style="left:506.8px;letter-spacing:0.037px">Aguascalientes</span><span style="left:569.1px;letter-spacing:-0.039px">AGU</span><span style="left:631.2px;letter-spacing:-0.093px">21.9208</span><span style="left:669.0px;letter-spacing:-0.133px">-102.58060000000000</span></div>
<div class="row even" style="top:526.26px;height:16.29px"><i class="cb"></i><svg class="ic" style="left:17.8px"><use href="#i-edit"/></svg><a style="left:31.2px;letter-spacing:0.096px">Edit</a><svg class="ic" style="left:50.5px"><use href="#i-inl"/></svg><a style="left:63.2px;letter-spacing:-0.070px;word-spacing:0.251px">Inline Edit</a><svg class="ic" style="left:104.8px"><use href="#i-copy"/></svg><a style="left:117.2px;letter-spacing:-0.058px">Copy</a><svg class="ic" style="left:140.4px"><use href="#i-del"/></svg><a style="left:153.2px;letter-spacing:-0.064px">Delete</a><span class="r" style="left:180px;width:48.7px;letter-spacing:-0.151px">20029</span><span style="left:232.1px;letter-spacing:-0.018px;word-spacing:0.251px">Villas de La Universidad</span><span style="left:445.1px;letter-spacing:0.037px">Aguascalientes</span><span style="left:506.8px;letter-spacing:0.037px">Aguascalientes</span><span style="left:569.1px;letter-spacing:-0.039px">AGU</span><span style="left:631.2px;letter-spacing:-0.093px">21.9208</span><span style="left:669.0px;letter-spacing:-0.133px">-102.58060000000000</span></div>
<div class="row odd" style="top:542.50px;height:16.29px"><i class="cb"></i><svg class="ic" style="left:17.8px"><use href="#i-edit"/></svg><a style="left:31.2px;letter-spacing:0.096px">Edit</a><svg class="ic" style="left:50.5px"><use href="#i-inl"/></svg><a style="left:63.2px;letter-spacing:-0.070px;word-spacing:0.251px">Inline Edit</a><svg class="ic" style="left:104.8px"><use href="#i-copy"/></svg><a style="left:117.2px;letter-spacing:-0.058px">Copy</a><svg class="ic" style="left:140.4px"><use href="#i-del"/></svg><a style="left:153.2px;letter-spacing:-0.064px">Delete</a><span class="r" style="left:180px;width:48.7px;letter-spacing:-0.151px">20030</span><span style="left:232.1px;letter-spacing:0.015px">Industrial</span><span style="left:445.1px;letter-spacing:0.037px">Aguascalientes</span><span style="left:506.8px;letter-spacing:0.037px">Aguascalientes</span><span style="left:569.1px;letter-spacing:-0.039px">AGU</span><span style="left:631.2px;letter-spacing:-0.093px">22.0785</span><span style="left:669.0px;letter-spacing:-0.133px">-102.46830000000000</span></div>
<div class="row even" style="top:558.74px;height:16.05px"><i class="cb"></i><svg class="ic" style="left:17.8px"><use href="#i-edit"/></svg><a style="left:31.2px;letter-spacing:0.096px">Edit</a><svg class="ic" style="left:50.5px"><use href="#i-inl"/></svg><a style="left:63.2px;letter-spacing:-0.070px;word-spacing:0.251px">Inline Edit</a><svg class="ic" style="left:104.8px"><use href="#i-copy"/></svg><a style="left:117.2px;letter-spacing:-0.058px">Copy</a><svg class="ic" style="left:140.4px"><use href="#i-del"/></svg><a style="left:153.2px;letter-spacing:-0.064px">Delete</a><span class="r" style="left:180px;width:48.7px;letter-spacing:-0.151px">20030</span><span style="left:232.1px;letter-spacing:0.069px;word-spacing:0.251px">El Sol</span><span style="left:445.1px;letter-spacing:0.037px">Aguascalientes</span><span style="left:506.8px;letter-spacing:0.037px">Aguascalientes</span><span style="left:569.1px;letter-spacing:-0.039px">AGU</span><span style="left:631.2px;letter-spacing:-0.093px">22.0785</span><span style="left:669.0px;letter-spacing:-0.133px">-102.46830000000000</span></div>
</body></html>
